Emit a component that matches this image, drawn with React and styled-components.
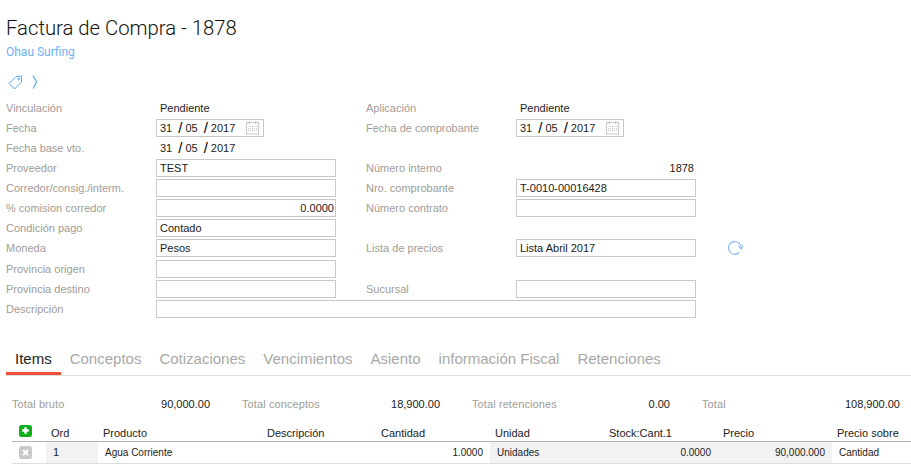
import React from 'react';
import styled, { createGlobalStyle } from 'styled-components';

const GlobalStyle = createGlobalStyle`
  html, body {
    margin: 0;
    padding: 0;
    background: #fff;
  }
  body {
    font-family: 'Liberation Sans', Arial, sans-serif;
    font-size: 11px;
    color: #222;
    overflow: hidden;
  }
`;

const TagIcon = () => (
  <svg width="15" height="15" viewBox="0 0 15 15" fill="none" stroke="#55a8f2" strokeWidth="1">
    <path d="M1 8.5 L8 1.5 L13.5 1 L13.5 7 L6.5 14 Z" strokeLinejoin="round" />
    <circle cx="10.8" cy="4" r="0.9" />
  </svg>
);

const ChevronIcon = () => (
  <svg width="6" height="14" viewBox="0 0 6 14" fill="none" stroke="#55a8f2" strokeWidth="1.2">
    <path d="M1 0.5 Q3 4 4.5 7 Q3 10 1 13.5" />
  </svg>
);

const CalendarIcon = () => (
  <svg width="14" height="14" viewBox="0 0 14 14" fill="none" stroke="#c6c6c6" strokeWidth="1">
    <rect x="0.5" y="1.5" width="12" height="11.5" />
    <path d="M3.5 0 V3 M9.5 0 V3" />
    <path d="M2 5.5 H11.5 M2 7.5 H11.5 M2 9.5 H11.5" strokeDasharray="1 1" />
  </svg>
);

const RefreshIcon = () => (
  <svg width="17" height="16" viewBox="0 0 17 16" fill="none" stroke="#7fb5ee" strokeWidth="1.1">
    <path d="M12.3 12.5 A6.4 6.4 0 1 1 14.2 8.6" />
    <path d="M11.5 6.2 L14.2 8.8 L15.9 5.6" />
  </svg>
);

const AddIcon = () => (
  <svg width="13" height="12" viewBox="0 0 13 12">
    <rect x="0" y="0" width="13" height="12" rx="2.5" fill="#0fb01c" />
    <path d="M6.5 2.2 V8.8 M3.2 5.5 H9.8" stroke="#fff" strokeWidth="2.4" />
  </svg>
);

const RemoveIcon = () => (
  <svg width="13" height="13" viewBox="0 0 13 13">
    <rect x="0" y="0" width="13" height="13" rx="2.5" fill="#c9c9c9" />
    <path d="M4 4 L9 9 M9 4 L4 9" stroke="#fff" strokeWidth="2" />
  </svg>
);

const Page = styled.div`
  width: 911px;
  height: 474px;
  overflow: hidden;
`;

const Title = styled.h1`
  margin: 0;
  padding: 16px 0 0 6px;
  font-family: Roboto, sans-serif;
  font-weight: 300;
  font-size: 20.3px;
  line-height: 24px;
  color: #111;
`;

const Company = styled.div`
  padding: 5px 0 0 6px;
  font-family: Roboto, sans-serif;
  font-size: 12px;
  line-height: 14px;
  color: #6db3f2;
`;

const IconRow = styled.div`
  display: flex;
  align-items: center;
  gap: 9px;
  height: 16px;
  padding: 15px 0 0 8px;
`;

const Form = styled.div`
  display: grid;
  grid-template-columns: 150px 210px 150px 180px 80px;
  grid-template-rows: repeat(8, 20px) 1px repeat(3, 20px);
  padding: 8px 0 0 6px;
`;

const RowGap = styled.div`
  grid-column: 1 / -1;
`;

const Label = styled.div`
  display: flex;
  align-items: center;
  color: #a09c99;
`;

const Plain = styled.div`
  display: flex;
  align-items: center;
  padding-left: 4px;
  justify-content: ${(p) => (p.$right ? 'flex-end' : 'flex-start')};
  padding-right: ${(p) => (p.$right ? 2 : 0)}px;
  color: #1a1a1a;
`;

const Input = styled.div`
  box-sizing: border-box;
  width: ${(p) => p.$width || 180}px;
  height: 18px;
  align-self: center;
  display: flex;
  align-items: center;
  justify-content: ${(p) => (p.$right ? 'flex-end' : 'flex-start')};
  padding: 0 ${(p) => (p.$right ? 1 : 3)}px 0 3px;
  border: 1px solid #c8c8c8;
  color: #1a1a1a;
  background: #fff;
`;

const DescInput = styled(Input)`
  width: 540px;
  grid-column: 2 / span 3;
`;

const DateText = styled.span`
  display: inline-flex;
  align-items: center;
  flex: 1;
`;

const Slash = styled.span`
  font-size: 15px;
  line-height: 14px;
  margin: 0 3px 0 6px;
  color: #000;
`;

const RefreshCell = styled.div`
  display: flex;
  align-items: center;
  padding-left: 31px;
`;

const Tabs = styled.div`
  display: flex;
  margin: 27px 0 0 6px;
  height: 29px;
  border-bottom: 1px solid #ddd;
`;

const Tab = styled.div`
  box-sizing: border-box;
  height: 29px;
  padding: 0 9px;
  font-size: 15px;
  line-height: 26px;
  color: ${(p) => (p.$active ? '#222' : '#a8a8a8')};
  border-bottom: ${(p) => (p.$active ? '3px solid #ee4f36' : '0')};
`;

const Totals = styled.div`
  display: grid;
  grid-template-columns: 100px 98px 32px 100px 98px 32px 100px 98px 32px 100px 98px;
  padding: 21px 0 0 12px;
  height: 14px;
  line-height: 14px;
`;

const TotalLabel = styled.div`
  color: #a09c99;
  letter-spacing: 0.1px;
`;

const TotalValue = styled.div`
  text-align: right;
  color: #1a1a1a;
`;

const TableGrid = styled.div`
  display: grid;
  grid-template-columns: 34px 52px 164px 114px 114px 114px 114px 114px 79px;
  margin: 12px 0 0 12px;
`;

const HeadCell = styled.div`
  box-sizing: border-box;
  height: 19px;
  padding: 4px 0 0 5px;
  line-height: 13px;
  color: #222;
  border-bottom: 1px solid #b5b5b5;
`;

const AddCell = styled(HeadCell)`
  padding: 2px 0 0 7px;
`;

const BodyCell = styled.div`
  box-sizing: border-box;
  height: 22px;
  display: flex;
  align-items: center;
  justify-content: ${(p) => (p.$right ? 'flex-end' : 'flex-start')};
  padding: 0 7px 1px 7px;
  font-size: ${(p) => (p.$small ? 10 : 11)}px;
  color: #222;
  background: ${(p) => (p.$grey ? '#f2f2f2' : '#fff')};
  border-bottom: 1px solid #ddd;
`;

const leftRows = [
  ['Proveedor', 'TEST', 'Número interno', null],
  ['Corredor/consig./interm.', '', 'Nro. comprobante', 'T-0010-00016428'],
  ['% comision corredor', '0.0000', 'Número contrato', ''],
  ['Condición pago', 'Contado', '', null],
];

const DateValue = () => (
  <DateText>
    31<Slash>/</Slash>05<Slash>/</Slash>2017
  </DateText>
);

export default function App() {
  return (
    <Page>
      <GlobalStyle />
      <Title>Factura de Compra - 1878</Title>
      <Company>Ohau Surfing</Company>
      <IconRow>
        <TagIcon />
        <ChevronIcon />
      </IconRow>
      <Form>
        <Label>Vinculación</Label>
        <Plain>Pendiente</Plain>
        <Label>Aplicación</Label>
        <Plain>Pendiente</Plain>
        <div />

        <Label>Fecha</Label>
        <Input $width={108}><DateValue /><CalendarIcon /></Input>
        <Label>Fecha de comprobante</Label>
        <Input $width={108}><DateValue /><CalendarIcon /></Input>
        <div />

        <Label>Fecha base vto.</Label>
        <Plain><DateValue /></Plain>
        <div />
        <div />
        <div />

        {leftRows.map((r) => (
          <React.Fragment key={r[0]}>
            <Label>{r[0]}</Label>
            <Input $right={r[1] === '0.0000'}>{r[1]}</Input>
            <Label>{r[2]}</Label>
            {r[2] === 'Número interno' ? (
              <Plain $right>1878</Plain>
            ) : r[3] === null ? (
              <div />
            ) : (
              <Input>{r[3]}</Input>
            )}
            <div />
          </React.Fragment>
        ))}

        <Label>Moneda</Label>
        <Input>Pesos</Input>
        <Label>Lista de precios</Label>
        <Input>Lista Abril 2017</Input>
        <RefreshCell><RefreshIcon /></RefreshCell>

        <RowGap />

        <Label>Provincia origen</Label>
        <Input />
        <div />
        <div />
        <div />

        <Label>Provincia destino</Label>
        <Input />
        <Label>Sucursal</Label>
        <Input />
        <div />

        <Label>Descripción</Label>
        <DescInput />
      </Form>
      <Tabs>
        <Tab $active>Items</Tab>
        <Tab>Conceptos</Tab>
        <Tab>Cotizaciones</Tab>
        <Tab>Vencimientos</Tab>
        <Tab>Asiento</Tab>
        <Tab>información Fiscal</Tab>
        <Tab>Retenciones</Tab>
      </Tabs>
      <Totals>
        <TotalLabel>Total bruto</TotalLabel>
        <TotalValue>90,000.00</TotalValue>
        <div />
        <TotalLabel>Total conceptos</TotalLabel>
        <TotalValue>18,900.00</TotalValue>
        <div />
        <TotalLabel>Total retenciones</TotalLabel>
        <TotalValue>0.00</TotalValue>
        <div />
        <TotalLabel>Total</TotalLabel>
        <TotalValue>108,900.00</TotalValue>
      </Totals>
      <TableGrid>
        <AddCell><AddIcon /></AddCell>
        <HeadCell>Ord</HeadCell>
        <HeadCell>Producto</HeadCell>
        <HeadCell>Descripción</HeadCell>
        <HeadCell>Cantidad</HeadCell>
        <HeadCell>Unidad</HeadCell>
        <HeadCell>Stock:Cant.1</HeadCell>
        <HeadCell>Precio</HeadCell>
        <HeadCell>Precio sobre</HeadCell>

        <BodyCell><RemoveIcon /></BodyCell>
        <BodyCell $grey>1</BodyCell>
        <BodyCell $small>Agua Corriente</BodyCell>
        <BodyCell />
        <BodyCell $right $small>1.0000</BodyCell>
        <BodyCell $grey $small>Unidades</BodyCell>
        <BodyCell $grey $right $small>0.0000</BodyCell>
        <BodyCell $grey $right $small>90,000.000</BodyCell>
        <BodyCell $small>Cantidad</BodyCell>
      </TableGrid>
    </Page>
  );
}
